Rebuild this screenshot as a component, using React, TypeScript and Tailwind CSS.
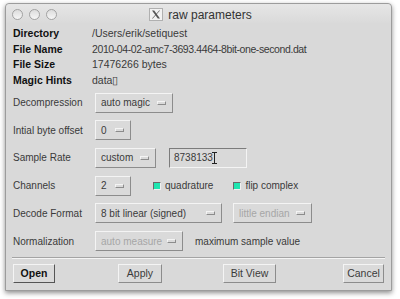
import React from 'react'

const raised = 'border border-t-[#f4f4f4] border-l-[#f4f4f4] border-b-[#8c8c8c] border-r-[#8c8c8c]'

function OptionMenu({ label, width, disabled }: { label: string; width: string; disabled?: boolean }) {
  return (
    <div className={`${width} h-[20px] flex items-center pl-[5px] pr-[6px] bg-[#dadada] ${raised}`}>
      <span className={disabled ? 'text-[#a6a6a6]' : 'text-[#3a3a3a]'}>{label}</span>
      <span className={`ml-auto w-[9px] h-[4px] bg-[#dadada] ${raised}`} />
    </div>
  )
}

function Check({ label }: { label: string }) {
  return (
    <div className="flex items-center gap-[4px]">
      <span className="w-[8px] h-[8px] bg-[#1fe6b0] border border-t-[#6a6a6a] border-l-[#6a6a6a] border-b-[#f0f0f0] border-r-[#f0f0f0]" />
      <span className="text-[#3a3a3a]">{label}</span>
    </div>
  )
}

function Row({ label, children }: { label: string; children: React.ReactNode }) {
  return (
    <div className="h-[27.7px] flex items-center">
      <div className="w-[82px] text-[#3a3a3a]">{label}</div>
      {children}
    </div>
  )
}

function Circle() {
  return (
    <span className="w-[11px] h-[11px] rounded-full border border-[#a2a2a2] bg-gradient-to-b from-[#dcdcdc] to-[#f6f6f6]" />
  )
}

function XLogo() {
  return (
    <svg width="14" height="13" viewBox="0 0 14 13">
      <rect x="0.5" y="0.5" width="13" height="12" fill="#f2f2f2" stroke="#b0b0b0" />
      <polygon points="3,2.5 5.2,2.5 11,10.5 8.8,10.5" fill="#555" />
      <polygon points="10.2,2.5 11,2.5 3.8,10.5 3,10.5" fill="#555" />
    </svg>
  )
}

function Button({ children, width, bold, className = '' }: { children: React.ReactNode; width: string; bold?: boolean; className?: string }) {
  return (
    <div
      className={`${width} ${className} h-[19px] flex items-center justify-center bg-[#dadada] border border-t-[#f4f4f4] border-l-[#f4f4f4] ${
        bold ? 'border-b-[#555] border-r-[#555] font-bold text-[#111]' : 'border-b-[#8c8c8c] border-r-[#8c8c8c] text-[#3a3a3a]'
      }`}
    >
      {children}
    </div>
  )
}

export default function App() {
  const info = [
    ['Directory', '/Users/erik/setiquest', ''],
    ['File Name', '2010-04-02-amc7-3693.4464-8bit-one-second.dat', 'tracking-[-0.4px]'],
    ['File Size', '17476266 bytes', ''],
    ['Magic Hints', 'data\u25AF', ''],
  ]

  return (
    <div className="w-[400px] h-[299px] bg-white pt-[3px] pl-[5px] font-['Liberation_Sans',Arial,sans-serif]">
      <div className="w-[387px] h-[288px] bg-[#d9d9d9] border border-[#9c9c9c] rounded-t-[4px] shadow-[0_2px_5px_rgba(0,0,0,0.45)] flex flex-col">
        {/* title bar */}
        <div className="h-[20px] grid grid-cols-[1fr_auto_1fr] items-center bg-gradient-to-b from-[#e6e6e6] to-[#d9d9d9] rounded-t-[4px]">
          <div className="flex items-center gap-[6px] pl-[6px]">
            <Circle />
            <Circle />
            <Circle />
          </div>
          <div className="flex items-center gap-[5px] text-[12px] text-[#333] pt-[1px] pl-[4px]">
            <XLogo />
            <span>raw parameters</span>
          </div>
          <div />
        </div>

        {/* info rows */}
        <div className="pl-[7px] text-[10.5px] leading-[16px] pt-[1px]">
          {info.map(([k, v, extra]) => (
            <div key={k} className="flex h-[15.7px]">
              <div className="w-[79px] font-bold text-[#111]">{k}</div>
              <div className={`text-[#3a3a3a] ${extra}`}>{v}</div>
            </div>
          ))}
        </div>

        {/* form rows */}
        <div className="pl-[7px] mt-[1px] text-[10px]">
          <Row label="Decompression">
            <OptionMenu label="auto magic" width="w-[78px]" />
          </Row>
          <Row label="Intial byte offset">
            <OptionMenu label="0" width="w-[36px]" />
          </Row>
          <Row label="Sample Rate">
            <OptionMenu label="custom" width="w-[61px]" />
            <div className="ml-[13px] w-[78px] h-[20px] flex items-center pl-[4px] bg-[#d9d9d9] border border-t-[#7c7c7c] border-l-[#7c7c7c] border-b-[#f4f4f4] border-r-[#f4f4f4] text-[#3a3a3a]">
              8738133
              <span className="ml-[1px] w-[1px] h-[12px] bg-[#222] relative before:absolute before:content-[''] before:-left-[2px] before:top-0 before:w-[5px] before:h-[1px] before:bg-[#222] after:absolute after:content-[''] after:-left-[2px] after:bottom-0 after:w-[5px] after:h-[1px] after:bg-[#222]" />
            </div>
          </Row>
          <Row label="Channels">
            <OptionMenu label="2" width="w-[36px]" />
            <div className="ml-[22px]">
              <Check label="quadrature" />
            </div>
            <div className="ml-[20px]">
              <Check label="flip complex" />
            </div>
          </Row>
          <Row label="Decode Format">
            <OptionMenu label="8 bit linear (signed)" width="w-[127px]" />
            <div className="ml-[11px]">
              <OptionMenu label="little endian" width="w-[79px]" disabled />
            </div>
          </Row>
          <Row label="Normalization">
            <OptionMenu label="auto measure" width="w-[88px]" disabled />
            <span className="ml-[12px] text-[#3a3a3a]">maximum sample value</span>
          </Row>
        </div>

        {/* separator */}
        <div className="mt-[2px] mx-[6px] h-[2px] border-t border-t-[#a4a4a4] border-b border-b-[#f4f4f4]" />

        {/* buttons */}
        <div className="mt-[5px] px-[7px] flex text-[10.5px]">
          <Button width="w-[42px]" bold>Open</Button>
          <Button width="w-[44px]" className="ml-[63px]">Apply</Button>
          <Button width="w-[53px]" className="ml-[61px]">Bit View</Button>
          <Button width="w-[41px]" className="ml-auto">Cancel</Button>
        </div>
      </div>
    </div>
  )
}
